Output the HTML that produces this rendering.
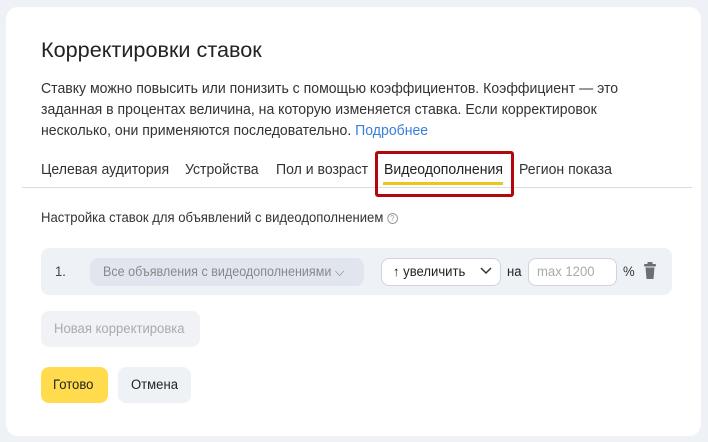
<!DOCTYPE html>
<html><head><meta charset="utf-8"><style>
*{margin:0;padding:0;box-sizing:border-box}
body{width:708px;height:442px;background:#eef1f5;font-family:"Liberation Sans",sans-serif;color:#222;position:relative;overflow:hidden}
.card{position:absolute;left:6px;top:7px;width:695px;height:429px;background:#fff;border-radius:12px}
.t{position:absolute;white-space:nowrap;transform-origin:0 50%;transform:scaleX(.97)}
.box{position:absolute;border-radius:8px}
</style></head><body>
<div class="card"></div>
<div class="t" style="left:41px;top:39px;font-size:21px;color:#222;transform:scaleX(1.03)">Корректировки ставок</div>
<div class="t" style="left:41px;top:79px;font-size:14.5px;line-height:21px;color:#333">Ставку можно повысить или понизить с помощью коэффициентов. Коэффициент — это</div>
<div class="t" style="left:41px;top:100px;font-size:14.5px;line-height:21px;color:#333">заданная в процентах величина, на которую изменяется ставка. Если корректировок</div>
<div class="t" style="left:41px;top:121px;font-size:14.5px;line-height:21px;color:#333">несколько, они применяются последовательно. <span style="color:#3b7ddd">Подробнее</span></div>
<div class="t" style="left:41px;top:162px;font-size:14.5px;color:#333">Целевая аудитория</div>
<div class="t" style="left:185px;top:162px;font-size:14.5px;color:#333">Устройства</div>
<div class="t" style="left:276px;top:162px;font-size:14.5px;color:#333">Пол и возраст</div>
<div class="t" style="left:384px;top:162px;font-size:14.5px;color:#222">Видеодополнения</div>
<div class="t" style="left:519px;top:162px;font-size:14.5px;color:#333">Регион показа</div>
<div style="position:absolute;left:22px;top:187px;width:670px;height:1px;background:#d9dce1"></div>
<div style="position:absolute;left:383px;top:182px;width:120px;height:3px;background:#f0c419"></div>
<div style="position:absolute;left:375px;top:151px;width:139px;height:46px;border:3px solid #b3070e;border-radius:3px"></div>
<div class="t" style="left:41px;top:210px;font-size:13.5px;color:#333">Настройка ставок для объявлений с видеодополнением <span style="display:inline-block;width:11px;height:11px;border:1px solid #999;border-radius:50%;font-size:8px;text-align:center;line-height:10px;color:#999;vertical-align:middle">?</span></div>
<div class="box" style="left:41px;top:248px;width:631px;height:47px;background:#eef1f6"></div>
<div class="t" style="left:55px;top:264px;font-size:13.5px;color:#444">1.</div>
<div class="box" style="left:90px;top:258px;width:274px;height:28px;background:#e1e6ee"></div>
<div class="t" style="left:103px;top:264px;font-size:13.5px;color:#888;transform:scaleX(.93)">Все объявления с видеодополнениями ⌵</div>
<div class="box" style="left:381px;top:258px;width:120px;height:28px;background:#fff;border:1px solid #cfd4db"></div>
<div class="t" style="left:393px;top:264px;font-size:13.5px;color:#222">↑ увеличить</div>
<svg style="position:absolute;left:480px;top:266px" width="12" height="10"><path d="M1 2 L6 7 L11 2" stroke="#333" stroke-width="1.5" fill="none"/></svg>
<div class="t" style="left:507px;top:264px;font-size:13.5px;color:#222">на</div>
<div class="box" style="left:528px;top:258px;width:89px;height:28px;background:#fff;border:1px solid #cfd4db"></div>
<div class="t" style="left:537px;top:264px;font-size:13.5px;color:#aaa">max 1200</div>
<div class="t" style="left:623px;top:264px;font-size:13.5px;color:#333">%</div>
<svg style="position:absolute;left:643px;top:262px" width="14" height="18"><rect x="4.5" y="0" width="5" height="2" fill="#6b6f76"/><rect x="1" y="2" width="12" height="2.5" rx="1" fill="#6b6f76"/><path d="M2.5 5.5 H11.5 L10.5 17 H3.5 Z" fill="#6b6f76"/></svg>
<div class="box" style="left:41px;top:311px;width:159px;height:36px;background:#f0f2f5"></div>
<div class="t" style="left:54px;top:321px;font-size:13.5px;color:#a8abb0">Новая корректировка</div>
<div class="box" style="left:41px;top:367px;width:67px;height:36px;background:#ffdb4d"></div>
<div class="t" style="left:53px;top:377px;font-size:13.5px;color:#222">Готово</div>
<div class="box" style="left:118px;top:367px;width:73px;height:36px;background:#eef1f5"></div>
<div class="t" style="left:131px;top:377px;font-size:13.5px;color:#222">Отмена</div>
</body></html>
